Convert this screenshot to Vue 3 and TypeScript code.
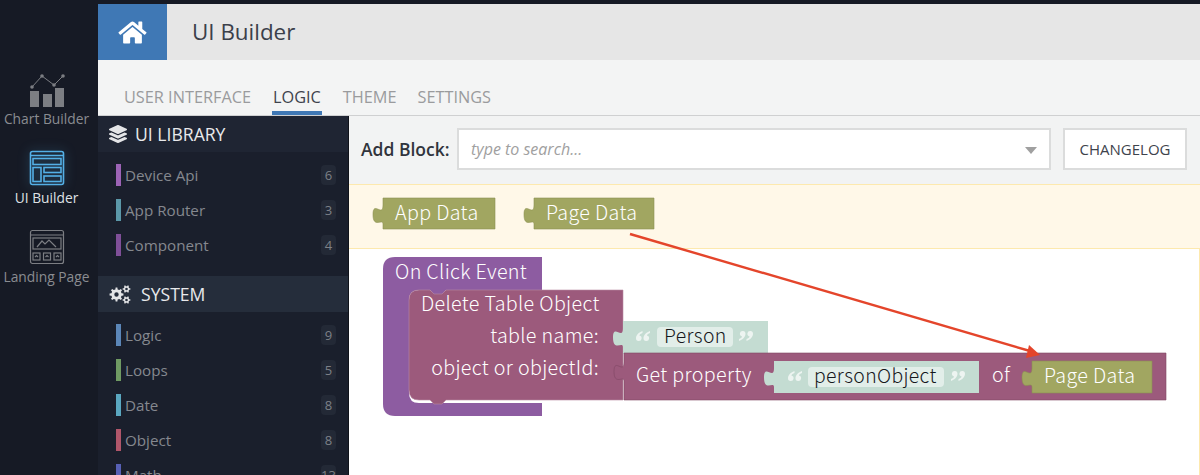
<script setup lang="ts">
interface Item { name: string; count: number; color: string }
const library: Item[] = [
  { name: 'Device Api', count: 6, color: '#9c63b5' },
  { name: 'App Router', count: 3, color: '#5b97a8' },
  { name: 'Component', count: 4, color: '#7f4f98' },
]
const system: Item[] = [
  { name: 'Logic', count: 9, color: '#5b86b8' },
  { name: 'Loops', count: 5, color: '#6f9a63' },
  { name: 'Date', count: 8, color: '#5aa7c0' },
  { name: 'Object', count: 8, color: '#b0566a' },
  { name: 'Math', count: 13, color: '#5760b5' },
]
const tabs = ['USER INTERFACE', 'LOGIC', 'THEME', 'SETTINGS']

function outputBlock(x: number, y: number, r: number, b: number): string {
  return `M${x} ${y}H${r}V${b}H${x}V${y + 26}c0,-6 -10,5 -10,-9.5s10,3.5 10,-9.5V${y}z`
}
function gear(cx: number, cy: number, ro: number, ri: number, hole: number, teeth: number): string {
  const pts: string[] = []
  const step = (Math.PI * 2) / teeth
  for (let i = 0; i < teeth; i++) {
    const a = i * step
    const angs: [number, number][] = [
      [a - step * 0.28, ri], [a - step * 0.16, ro], [a + step * 0.16, ro], [a + step * 0.28, ri],
    ]
    for (const [t, rad] of angs) {
      pts.push(`${(cx + rad * Math.cos(t)).toFixed(2)} ${(cy + rad * Math.sin(t)).toFixed(2)}`)
    }
  }
  const ring = `M${pts.join('L')}z`
  const h = `M${cx - hole} ${cy}a${hole} ${hole} 0 1 0 ${hole * 2} 0a${hole} ${hole} 0 1 0 ${-hole * 2} 0z`
  return ring + h
}
const cogs = gear(7.5, 9.5, 7, 5.2, 2.2, 8) + gear(17.5, 4, 3.9, 2.8, 1.3, 6) + gear(17.5, 15, 3.9, 2.8, 1.3, 6)

const appData = outputBlock(383, 198, 495, 229)
const pageData = outputBlock(534, 198, 654, 229)
const person = outputBlock(623, 321, 768, 354)
const personObj = outputBlock(774, 361, 979, 393)
const pageData2 = outputBlock(1032, 361, 1152, 393)
const hat =
  'M395 257H542V290H446l-4 5h-8l-4 -5H419q-10 0 -10 10V393q0 10 10 10H542V416H395q-12 0 -12 -12V269q0 -12 12 -12z'
const del =
  'M419 290H430l4 4h8l4 -4H623V400H446l-4 4h-8l-4 -4H419q-10 0 -10 -10V300q0 -10 10 -10z'
const getProp =
  'M624 353H1166V400H624V381c0,-6 -10,5 -10,-9.500s10,3.500 10,-9.500z'
const quoteOpen =
  'M6.500 0C2 1.500 0 4.500 0 7.200a2.800 2.800 0 1 0 3.400-2.700C3.600 3.400 5 2.400 6.500 2zM14 0C9.500 1.500 7.500 4.500 7.500 7.200a2.800 2.800 0 1 0 3.400-2.700C11.100 3.400 12.500 2.400 14 2z'
const quoteMarks = [
  { x: 636, y: 331, open: true },
  { x: 739, y: 331, open: false },
  { x: 788, y: 371, open: true },
  { x: 951, y: 371, open: false },
]
</script>

<template>
  <div class="page">
    <nav class="rail">
      <div class="rail-item">
        <svg class="rail-icon" viewBox="0 0 36 36" width="36" height="36">
          <path d="M3 16L13 5L25 14L34 5" fill="none" stroke="#7c7e83" stroke-width="1" />
          <g fill="#7c7e83">
            <circle cx="3" cy="16" r="1.8" /><circle cx="13" cy="5" r="1.8" />
            <circle cx="25" cy="14" r="1.8" /><circle cx="34" cy="5" r="1.8" />
            <rect x="1" y="20" width="9" height="16" /><rect x="14" y="23" width="9" height="13" /><rect x="26" y="17" width="9" height="19" />
          </g>
        </svg>
        <span>Chart Builder</span>
      </div>
      <div class="rail-item active">
        <svg class="rail-icon glow" viewBox="0 0 36 36" width="36" height="36">
          <g fill="none" stroke="#54b0e6" stroke-width="1.6">
            <rect x="1.500" y="1.500" width="33" height="33" rx="2" />
            <path d="M1.500 5.500H34.500" />
            <rect x="4" y="8.500" width="28" height="6" />
            <rect x="4" y="17.500" width="8" height="14" />
            <rect x="15" y="17.500" width="17" height="5" />
            <rect x="15" y="26" width="17" height="5.500" />
          </g>
        </svg>
        <span>UI Builder</span>
      </div>
      <div class="rail-item">
        <svg class="rail-icon" viewBox="0 0 36 36" width="36" height="36">
          <g fill="none" stroke="#7c7e83" stroke-width="1.2">
            <rect x="1.500" y="1.500" width="33" height="33" rx="2" />
            <path d="M1.500 6H34.500" />
            <rect x="4" y="9" width="28" height="11" />
            <path d="M8 18L13 12L16 15L20 11L27 18" />
            <rect x="4" y="24" width="7" height="7" /><rect x="14.500" y="24" width="7" height="7" /><rect x="25" y="24" width="7" height="7" />
            <path d="M6 28l1.500-1.500L9 28M16.500 28l1.500-1.500L19.500 28M27 28l1.500-1.500L30 28" />
          </g>
        </svg>
        <span>Landing Page</span>
      </div>
    </nav>

    <div class="app">
      <header class="head">
        <div class="home">
          <svg viewBox="0 0 576 512" width="29" height="25" fill="#fff">
            <path d="M280.37 148.26L96 300.11V464a16 16 0 0 0 16 16l112.06-.29a16 16 0 0 0 15.92-16V368a16 16 0 0 1 16-16h64a16 16 0 0 1 16 16v95.64a16 16 0 0 0 16 16.05L464 480a16 16 0 0 0 16-16V300L295.67 148.26a12.19 12.19 0 0 0-15.3 0zM571.6 251.47L488 182.56V44.05a12 12 0 0 0-12-12h-56a12 12 0 0 0-12 12v72.61L318.47 43a48 48 0 0 0-61 0L4.34 251.47a12 12 0 0 0-1.6 16.9l25.5 31A12 12 0 0 0 45.15 301l235.22-193.74a12.19 12.19 0 0 1 15.3 0L530.9 301a12 12 0 0 0 16.9-1.6l25.5-31a12 12 0 0 0-1.7-16.93z" />
          </svg>
        </div>
        <h1>UI Builder</h1>
      </header>

      <div class="tabs">
        <span v-for="t in tabs" :key="t" class="tab" :class="{ current: t === 'LOGIC' }">{{ t }}</span>
      </div>

      <div class="body">
        <aside class="side">
          <div class="side-head first">
            <svg viewBox="0 0 512 512" width="18" height="18" fill="#e4e5e7">
              <path d="M12.41 148.02l232.94 105.67c6.8 3.09 14.49 3.09 21.29 0l232.94-105.67c16.55-7.51 16.55-32.52 0-40.03L266.65 2.31a25.607 25.607 0 0 0-21.29 0L12.41 107.98c-16.55 7.51-16.55 32.53 0 40.04zm487.18 88.28l-58.09-26.33-161.64 73.27c-7.56 3.43-15.59 5.17-23.86 5.17s-16.29-1.74-23.86-5.17L70.51 209.97l-58.1 26.33c-16.55 7.5-16.55 32.5 0 40l232.94 105.59c6.8 3.08 14.49 3.08 21.29 0L499.59 276.3c16.55-7.5 16.55-32.5 0-40zm0 127.8l-57.87-26.23-161.86 73.37c-7.56 3.43-15.59 5.17-23.86 5.17s-16.29-1.74-23.86-5.17L70.29 337.87 12.41 364.1c-16.55 7.5-16.55 32.5 0 40l232.94 105.59c6.8 3.08 14.49 3.08 21.29 0L499.59 404.1c16.55-7.5 16.55-32.5 0-40z" />
            </svg>
            <span>UI LIBRARY</span>
          </div>
          <ul class="list lib">
            <li v-for="i in library" :key="i.name">
              <i class="bar" :style="{ background: i.color }"></i>
              <span class="name">{{ i.name }}</span>
              <b class="count">{{ i.count }}</b>
            </li>
          </ul>
          <div class="side-head second">
            <svg viewBox="0 0 22 19" width="22" height="19" fill="#e4e5e7" fill-rule="evenodd">
              <path :d="cogs" />
            </svg>
            <span>SYSTEM</span>
          </div>
          <ul class="list">
            <li v-for="i in system" :key="i.name">
              <i class="bar" :style="{ background: i.color }"></i>
              <span class="name">{{ i.name }}</span>
              <b class="count">{{ i.count }}</b>
            </li>
          </ul>
        </aside>

        <main class="main">
          <div class="toolbar">
            <label>Add Block:</label>
            <div class="search">
              <input placeholder="type to search..." />
              <i class="caret"></i>
            </div>
            <button>CHANGELOG</button>
          </div>
          <div class="workspace">
            <div class="flyout"></div>
            <div class="canvas"></div>
            <svg class="blocks" viewBox="349 184 851 291" width="851" height="291">
              <g fill="#a1a661" stroke="#8b9050" stroke-width="0.6">
                <path :d="appData" /><path :d="pageData" />
              </g>
              <path :d="hat" fill="#8d5ca1" />
              <path :d="del" fill="#9c5a7c" stroke="#b98aa3" stroke-width="0.6" />
              <path :d="person" fill="#c4dcd2" />
              <path :d="getProp" fill="#9c5a7c" stroke="#7f4763" stroke-width="0.6" />
              <path :d="personObj" fill="#c4dcd2" />
              <path :d="pageData2" fill="#a1a661" stroke="#8b9050" stroke-width="0.6" />
              <rect x="657" y="327" width="76" height="20" rx="4" fill="#e2eee9" />
              <rect x="808" y="367" width="136" height="20" rx="4" fill="#e2eee9" />

              <g class="btext">
                <text x="395" y="220">App Data</text>
                <text x="546" y="220">Page Data</text>
                <text x="395" y="279">On Click Event</text>
                <text x="421" y="311">Delete Table Object</text>
                <text x="599" y="343" text-anchor="end">table name:</text>
                <text x="599" y="375" text-anchor="end">object or objectId:</text>
                <text x="636" y="382">Get property</text>
                <text x="992" y="382">of</text>
                <text x="1044" y="383">Page Data</text>
              </g>
              <path
                v-for="q in quoteMarks"
                :key="q.x"
                :d="quoteOpen"
                fill="#edf4f1"
                :transform="q.open ? `translate(${q.x} ${q.y})` : `translate(${q.x + 14} ${q.y + 10}) rotate(180)`"
              />
              <g class="bfield">
                <text x="664" y="343">Person</text>
                <text x="814" y="383">personObject</text>
              </g>

              <path d="M630 234L1030 351" stroke="#e4452b" stroke-width="2.4" fill="none" />
              <path d="M1040 355L1026 358L1029 345z" fill="#e4452b" />
            </svg>
          </div>
        </main>
      </div>
    </div>
  </div>
</template>

<style scoped>
.page {
  width: 1200px;
  height: 475px;
  overflow: hidden;
  display: flex;
  background: #161a25;
  box-sizing: border-box;
  padding-top: 4px;
  font-family: "Open Sans", "Liberation Sans", sans-serif;
}
.rail {
  width: 98px;
  flex: none;
  display: flex;
  flex-direction: column;
  align-items: flex-start;
  padding-top: 67px;
  gap: 22px;
  box-sizing: border-box;
}
.rail-item {
  display: flex;
  flex-direction: column;
  align-items: center;
  gap: 3px;
  width: 93px;
  font-size: 13.800px;
  line-height: 18px;
  color: #8a8c91;
  white-space: nowrap;
}
.rail-item.active { color: #dfe1e4; }
.glow { filter: drop-shadow(0 0 6px rgba(84, 176, 230, 0.35)); }
.rail-icon { display: block; }
.app { flex: 1; min-width: 0; display: flex; flex-direction: column; }
.head {
  height: 56px;
  flex: none;
  display: flex;
  align-items: center;
  background: #e6e6e6;
}
.home {
  width: 69px;
  height: 56px;
  background: #3f78b5;
  display: flex;
  align-items: center;
  justify-content: center;
}
.head h1 {
  margin: 0 0 2px 25px;
  font-size: 22.400px;
  font-weight: 400;
  color: #3b404a;
}
.tabs {
  height: 56px;
  flex: none;
  box-sizing: border-box;
  background: #f3f4f4;
  border-bottom: 1px solid #cfd0d1;
  display: flex;
  align-items: flex-end;
  padding-left: 26px;
  gap: 21px;
}
.tab {
  font-size: 16.300px;
  color: #9a9b9d;
  height: 35px;
  line-height: 34px;
  box-sizing: border-box;
  white-space: nowrap;
}
.tab.current {
  color: #3e434c;
  border-bottom: 4px solid #3f78b5;
  padding: 0 1px;
}
.body { flex: 1; min-height: 0; display: flex; }
.side {
  width: 250px;
  flex: none;
  background: #1a1f2c;
  color: #85888f;
  border-right: 1px solid #10131a;
}
.side-head {
  height: 36px;
  display: flex;
  align-items: center;
  padding-left: 11px;
  gap: 8px;
  color: #e8e9eb;
  font-size: 17.600px;
  line-height: 34px;
}
.side-head.first { background: #1f2533; }
.side-head.second { background: #252d3b; gap: 10px; }
.list {
  list-style: none;
  margin: 0;
  padding: 5px 0 0;
}
.list.lib { padding: 5px 0 14px; }
.list li {
  height: 35px;
  display: flex;
  align-items: center;
  padding: 0 12px 0 18px;
  font-size: 15.200px;
}
.bar { width: 5px; height: 22px; flex: none; margin-right: 4px; }
.name { flex: 1; }
.count {
  min-width: 15px;
  height: 20px;
  line-height: 20px;
  text-align: center;
  font-weight: 400;
  font-size: 13px;
  border-radius: 4px;
  background: #232936;
  color: #7d8087;
}
.main { flex: 1; min-width: 0; display: flex; flex-direction: column; background: #fff; }
.toolbar {
  height: 68px;
  flex: none;
  box-sizing: border-box;
  background: #f2f3f3;
  display: flex;
  align-items: center;
  padding: 0 13px 2px 12px;
}
.toolbar label {
  width: 96px;
  flex: none;
  font-size: 17.500px;
  font-weight: 600;
  color: #30343c;
  white-space: nowrap;
}
.search {
  position: relative;
  width: 594px;
  height: 42px;
  margin-right: 12px;
}
.search input {
  width: 100%;
  height: 100%;
  box-sizing: border-box;
  border: 2px solid #dbdcdc;
  background: #fff;
  padding: 0 12px;
  font-family: inherit;
  font-size: 16px;
  font-style: italic;
  outline: none;
}
.search input::placeholder { color: #a0a0a0; opacity: 1; }
.caret {
  position: absolute;
  right: 14px;
  top: 19px;
  border-left: 6px solid transparent;
  border-right: 6px solid transparent;
  border-top: 7px solid #a0a0a0;
}
.toolbar button {
  width: 124px;
  height: 42px;
  box-sizing: border-box;
  border: 2px solid #dbdcdc;
  background: #fff;
  font-family: inherit;
  font-size: 15px;
  color: #3e434c;
  padding: 0;
}
.workspace { position: relative; flex: 1; min-height: 0; display: flex; flex-direction: column; }
.flyout {
  height: 65px;
  flex: none;
  box-sizing: border-box;
  background: #fff8e8;
  border-top: 1px solid #fde9ae;
  border-bottom: 1px solid #fde9ae;
}
.canvas { flex: 1; background: #fff; border-right: 1px solid #fde9ae; }
.blocks { position: absolute; left: 0; top: 0; display: block; }
.btext text {
  font-family: "Noto Sans CJK JP", "Noto Sans", sans-serif;
  font-size: 19.700px;
  font-weight: 300;
  letter-spacing: 0.35px;
  fill: #fff;
}
.bfield text {
  font-family: "Noto Sans CJK JP", "Noto Sans", sans-serif;
  font-size: 19.400px;
  font-weight: 300;
  letter-spacing: 0.35px;
  fill: #16181c;
}
</style>

<style>
html, body { margin: 0; overflow: hidden; background: #161a25; }
</style>
